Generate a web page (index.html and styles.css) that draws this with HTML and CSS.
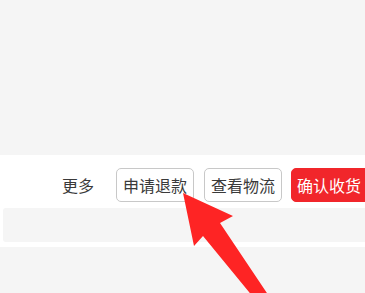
FILE: index.html
```html
<!DOCTYPE html>
<html>
<head>
<meta charset="utf-8">
<link rel="stylesheet" href="styles.css">
<title>订单操作</title>
</head>
<body>
<div class="top"></div>
<div class="panel">
  <div class="actions">
    <span class="more">更多</span>
    <button class="btn">申请退款</button>
    <button class="btn">查看物流</button>
    <button class="btn primary">确认收货</button>
  </div>
  <div class="strip"></div>
</div>
<svg class="arrow" width="365" height="293" viewBox="0 0 365 293">
  <polygon points="183,193 233,216 220,223 285,320 272,320 203,236 194,246" fill="#fe2424"/>
</svg>
</body>
</html>
```

FILE: styles.css
```css
body {
	margin: 0;
	background-color: #f5f5f5;
	font-family: "Noto Sans CJK SC", sans-serif;
	overflow: hidden;
	height: 293px;
	position: relative;
}
.top {
	height: 155px;
}
.panel {
	background-color: white;
	padding: 13px 0 5px 3px;
}
.actions {
	display: flex;
	align-items: center;
	height: 34px;
	padding-left: 59px;
	white-space: nowrap;
}
.more {
	font-size: 16px;
	color: #3a3a3a;
	margin-right: 22px;
}
.btn {
	flex: none;
	height: 34px;
	padding: 0 6px;
	margin-right: 10px;
	font-family: inherit;
	font-size: 16px;
	color: #3a3a3a;
	background-color: white;
	border: 1px solid #c8c8c8;
	border-radius: 5px;
}
.btn.primary {
	margin-right: 0;
	margin-left: -1px;
	padding: 0 10px 0 5px;
	color: white;
	background-color: #f1262b;
	border-color: #f1262b;
}
.strip {
	margin-top: 6px;
	height: 34px;
	background-color: #f5f5f5;
	border-radius: 3px 0 0 3px;
}
.arrow {
	position: absolute;
	left: 0;
	top: 0;
}
```
